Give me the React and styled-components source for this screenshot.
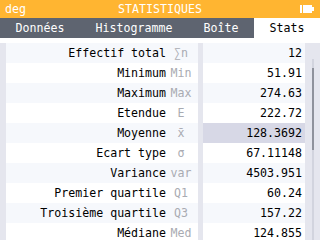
import React from "react";
import styled, { createGlobalStyle } from "styled-components";

const GlobalStyle = createGlobalStyle`
  html, body {
    margin: 0;
    padding: 0;
    background: #ffffff;
  }
  body {
    font-family: "DejaVu Sans Mono", "Liberation Mono", monospace;
    font-size: 11.6px;
  }
`;

const rows = [
  { label: "Effectif total", symbol: "∑n", value: "12" },
  { label: "Minimum", symbol: "Min", value: "51.91" },
  { label: "Maximum", symbol: "Max", value: "274.63" },
  { label: "Etendue", symbol: "E", value: "222.72" },
  { label: "Moyenne", symbol: "x̄", value: "128.3692", selected: true },
  { label: "Ecart type", symbol: "σ", value: "67.11148" },
  { label: "Variance", symbol: "var", value: "4503.951" },
  { label: "Premier quartile", symbol: "Q1", value: "60.24" },
  { label: "Troisième quartile", symbol: "Q3", value: "157.22" },
  { label: "Médiane", symbol: "Med", value: "124.855" },
];

const tabs = ["Données", "Histogramme", "Boîte", "Stats"];

function Battery() {
  return (
    <svg width="14" height="8" viewBox="0 0 14 8">
      <rect x="0" y="0" width="2" height="8" fill="#fff" />
      <rect x="3" y="0" width="9" height="8" fill="#fff" />
      <rect x="12" y="2" width="2" height="4" fill="#fff" />
    </svg>
  );
}

function App() {
  return (
    <Screen>
      <GlobalStyle />
      <Header>
        <HeaderText>deg</HeaderText>
        <Title>STATISTIQUES</Title>
        <BatterySlot>
          <Battery />
        </BatterySlot>
      </Header>
      <TabBar>
        {tabs.map((t) => (
          <Tab key={t} active={t === "Stats"}>
            {t}
          </Tab>
        ))}
      </TabBar>
      <TopGap />
      <Body>
        <Table>
          {rows.map((r, i) => (
            <Row key={r.label}>
              <LabelCell odd={i % 2 === 1}>
                <Label>{r.label}</Label>
                <Symbol>{r.symbol}</Symbol>
              </LabelCell>
              <ValueCell odd={i % 2 === 1} selected={r.selected}>
                {r.value}
              </ValueCell>
            </Row>
          ))}
        </Table>
        <ScrollArea>
          <Track>
            <Thumb />
          </Track>
        </ScrollArea>
      </Body>
    </Screen>
  );
}

export default App;

const Screen = styled.div`
  width: 320px;
  height: 240px;
  overflow: hidden;
  background: #ffffff;
`;

const Header = styled.div`
  height: 18px;
  background: #ffb531;
  color: #ffffff;
  display: flex;
  align-items: center;
  padding: 0 6px 0 5px;
  position: relative;
`;

const HeaderText = styled.span`
  line-height: 18px;
`;

const Title = styled.span`
  position: absolute;
  left: 0;
  right: 0;
  text-align: center;
  line-height: 18px;
`;

const BatterySlot = styled.span`
  margin-left: auto;
  display: flex;
  align-items: center;
`;

const TabBar = styled.div`
  height: 20px;
  display: flex;
  background: #5e6470;
`;

const Tab = styled.div`
  flex: 1 0 auto;
  padding: 0 15px;
  text-align: center;
  line-height: 20px;
  color: ${(p) => (p.active ? "#000000" : "#ffffff")};
  background: ${(p) => (p.active ? "#ffffff" : "transparent")};
`;

const TopGap = styled.div`
  height: 5px;
  background: #ffffff;
`;

const Body = styled.div`
  display: flex;
  background: #e5e6ee;
  padding-left: 6px;
  height: 197px;
`;

const Table = styled.div`
  display: flex;
  flex-direction: column;
  width: 299px;
`;

const Row = styled.div`
  display: flex;
  height: 20px;
  gap: 5px;
`;

const LabelCell = styled.div`
  width: 192px;
  display: flex;
  justify-content: flex-end;
  align-items: center;
  padding-right: 2px;
  box-sizing: border-box;
  background: ${(p) => (p.odd ? "#ffffff" : "#f6f8fc")};
  color: #000000;
`;

const Label = styled.span`
  white-space: nowrap;
`;

const Symbol = styled.span`
  width: 30px;
  text-align: center;
  color: #a9abb2;
`;

const ValueCell = styled.div`
  width: 102px;
  text-align: right;
  padding-right: 3px;
  box-sizing: border-box;
  line-height: 20px;
  color: #000000;
  background: ${(p) =>
    p.selected ? "#d7d8e6" : p.odd ? "#ffffff" : "#f6f8fc"};
`;

const ScrollArea = styled.div`
  flex: 1;
  display: flex;
  justify-content: center;
  padding-top: 16px;
`;

const Track = styled.div`
  width: 2px;
  height: 180px;
  background: #d2d4de;
  padding-top: 9px;
`;

const Thumb = styled.div`
  width: 2px;
  height: 82px;
  background: #8f929c;
`;
